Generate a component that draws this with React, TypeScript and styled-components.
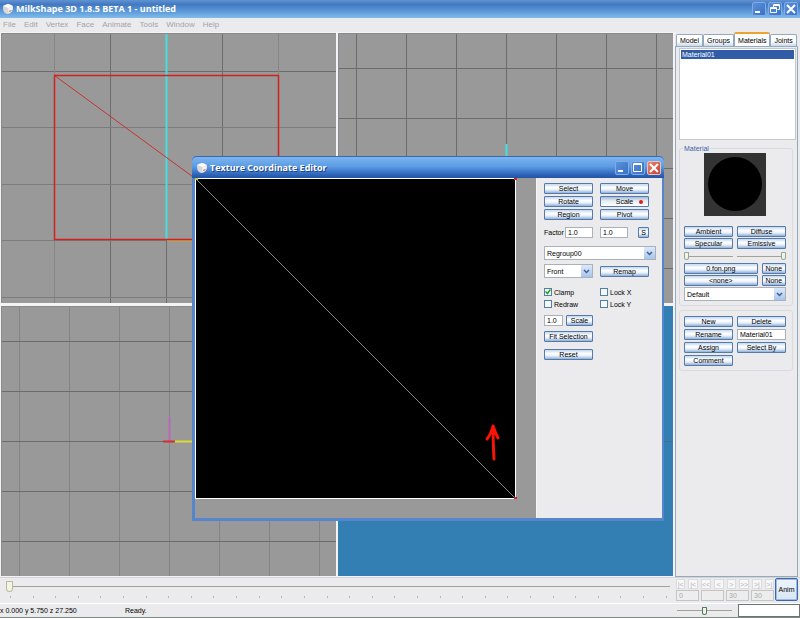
import React from 'react';
import styled, { createGlobalStyle, css } from 'styled-components';

const GlobalStyle = createGlobalStyle`
  *, *::before, *::after { box-sizing: border-box; }
  body { margin: 0; background: #ebebed; }
  body, button, input, select {
    font-family: "Liberation Sans", Arial, sans-serif;
    font-size: 7px;
    line-height: 9px;
    color: #000;
  }
  button, input, select, fieldset { margin: 0; padding: 0; }
`;

const Shell = styled.div`
  position: relative;
  display: flex;
  flex-direction: column;
  min-height: 100vh;
  border-bottom: 1px solid #7d8a84;
`;

const TitleBar = styled.header`
  display: flex;
  align-items: center;
  height: 18px;
  padding: 0 2px;
  gap: 2px;
  background: linear-gradient(#5f93d4, #4478bf 25%, #5d9bdb 65%, #82bbea);
`;

const titleText = css`
  flex: 1;
  margin: 0;
  font-family: "Open Sans", "Noto Sans", sans-serif;
  font-size: 9px;
  font-weight: 700;
  line-height: 12px;
  color: #fff;
  white-space: nowrap;
`;

const AppTitle = styled.h1`
  ${titleText}
`;

const WindowButtons = styled.div`
  display: flex;
  gap: 2px;
`;

const CaptionButton = styled.button<{ $danger?: boolean }>`
  display: flex;
  width: 14px;
  height: 14px;
  border: 1px solid ${p => (p.$danger ? '#e9c3c0' : '#7fabe6')};
  border-radius: 2px;
  background: ${p => (p.$danger ? 'linear-gradient(135deg, #e58a76, #c83b2c)' : 'linear-gradient(135deg, #5a90da, #3a72c4)')};
  svg { width: 12px; height: 12px; }
`;

const MenuBar = styled.nav`
  display: flex;
  gap: 8px;
  height: 14px;
  padding: 2px 3px;
  background: #ebebed;
`;

const MenuLink = styled.a`
  font-size: 8px;
  line-height: 10px;
  color: #a4a4a7;
  text-decoration: none;
`;

const Workspace = styled.main`
  flex: 1;
  display: grid;
  grid-template-columns: 1fr 125px;
  gap: 2px;
  background: #f4f4f6;
`;

const Views = styled.div`
  display: grid;
  grid-template: 1fr 1fr / 1fr 1fr;
  gap: 3px 2px;
  padding: 1px 0 1px 1px;
`;

const View = styled.svg<{ $empty?: boolean }>`
  display: block;
  width: 100%;
  height: 100%;
  border: 1px solid ${p => (p.$empty ? '#337fb3' : '#8a8a8c')};
  border-width: 1px 0 0 1px;
  background: ${p => (p.$empty ? '#337fb3' : '#999')};
`;

const SidePanel = styled.aside`
  display: flex;
  flex-direction: column;
  background: #ebebed;
`;

const TabList = styled.div`
  display: flex;
  align-items: flex-end;
  height: 14px;
  padding-left: 1px;
`;

const Tab = styled.button<{ $active?: boolean }>`
  height: ${p => (p.$active ? 14 : 12)}px;
  padding: 0 3px;
  border: 1px solid #94a9c0;
  border-top: ${p => (p.$active ? '2px solid #eda32f' : '1px solid #94a9c0')};
  border-bottom: 0;
  border-radius: 2px 2px 0 0;
  background: ${p => (p.$active ? '#fcfcfd' : 'linear-gradient(#fff 60%, #c9d8ea)')};
`;

const TabPage = styled.div`
  flex: 1;
  display: flex;
  flex-direction: column;
  margin-right: 2px;
  padding: 1px 1px 1px 3px;
  border: 1px solid #93aabd;
`;

const MaterialList = styled.ul`
  height: 92px;
  margin: 0 0 4px;
  padding: 1px;
  border: 1px solid #c4c8cc;
  background: #fff;
  list-style: none;
`;

const MaterialItem = styled.li`
  padding-left: 1px;
  background: #315da8;
  color: #fff;
`;

const Group = styled.fieldset<{ $gap: number }>`
  display: flex;
  flex-direction: column;
  gap: ${p => p.$gap}px;
  min-width: 0;
  margin: 0 3px 4px 0;
  padding: 5px 6px 4px 4px;
  border: 1px solid #d9dadc;
  border-radius: 3px;
`;

const Legend = styled.legend`
  height: 9px;
  padding: 0 1px;
  margin-left: -1px;
  color: #3c62a8;
`;

const Preview = styled.svg`
  width: 62px;
  height: 63px;
  margin: -5px auto 9px;
  background: #333;
`;

const Pair = styled.div<{ $wide?: boolean }>`
  display: grid;
  grid-template-columns: ${p => (p.$wide ? '3fr 1fr' : '1fr 1fr')};
  gap: 4px;
  align-items: center;
`;

const PushButton = styled.button<{ $pressed?: boolean }>`
  position: relative;
  width: 100%;
  height: 11px;
  border: 1px solid #5579aa;
  border-radius: 1px;
  background: ${p =>
    p.$pressed
      ? 'linear-gradient(#a8bcd8, #e8edf4 45%, #fff)'
      : 'linear-gradient(#c4d8ee, #fff 40%, #e9f0f8 65%, #8fb0da)'};
  white-space: nowrap;
`;

const RedDot = styled.i`
  position: absolute;
  right: 5px;
  top: 3px;
  width: 4px;
  height: 4px;
  border-radius: 50%;
  background: #e21c1c;
`;

const TextBox = styled.input`
  width: 100%;
  min-width: 0;
  height: 11px;
  padding: 0 2px;
  border: 1px solid #a9b1bb;
  background: #fff;
  &:disabled { background: #ededee; color: #aaa; border-color: #c2c4c6; }
`;

const Combo = styled.span`
  position: relative;
  display: block;
  height: 14px;
  svg {
    position: absolute;
    right: 1px;
    top: 1px;
    width: 11px;
    height: 12px;
    background: linear-gradient(#dce9fb, #a9c5ec);
    pointer-events: none;
  }
`;

const Select = styled.select`
  width: 100%;
  height: 14px;
  padding: 0 2px;
  border: 1px solid #a9b1bb;
  border-radius: 0;
  background: #fff;
  appearance: none;
`;

const Range = styled.input<{ $tone?: string; $tall?: boolean }>`
  appearance: none;
  display: block;
  width: 100%;
  min-width: 0;
  height: ${p => (p.$tall ? 14 : 12)}px;
  background: linear-gradient(#a3a395, #a3a395) center / 100% 1px no-repeat;
  &::-webkit-slider-thumb {
    appearance: none;
    width: ${p => (p.$tall ? 7 : 5)}px;
    height: ${p => (p.$tall ? 11 : 8)}px;
    border: 1px solid ${p => p.$tone || '#8fa89c'};
    border-radius: 1px 1px 4px 4px;
    background: #f3f3e6;
  }
`;

const Footer = styled.footer`
  display: grid;
  grid-template-columns: 1fr 98px 26px;
  height: 26px;
  border-top: 1px solid #d4d4d7;
`;

const Timeline = styled.div`
  display: flex;
  flex-direction: column;
  padding: 1px 6px 0;
`;

const Ticks = styled.div`
  display: flex;
  justify-content: space-between;
  padding: 3px 3px 0 4px;
`;

const Tick = styled.i`
  width: 1px;
  height: 2px;
  background: #b4b4b6;
`;

const Transport = styled.div`
  display: grid;
  grid-template-rows: 10px 12px;
  gap: 1px;
  padding-top: 1px;
`;

const TransportRow = styled.div<{ $columns: number }>`
  display: grid;
  grid-template-columns: repeat(${p => p.$columns}, 1fr);
  gap: ${p => (p.$columns > 4 ? 3 : 2)}px;
`;

const TransportButton = styled.button`
  border: 1px solid #dcdcde;
  background: #f7f7f8;
  color: #b4b4b7;
  line-height: 7px;
`;

const AnimButton = styled.button`
  width: 23px;
  height: 23px;
  margin-left: 1px;
  border: 1px solid #3d67aa;
  border-radius: 2px;
  background: linear-gradient(#eef4fc, #d9e6f5);
  box-shadow: inset 0 0 0 1px #9dbbe4;
`;

const StatusBar = styled.div`
  display: grid;
  grid-template-columns: 119px 1fr 55px 62px;
  gap: 0 6px;
  align-items: center;
  height: 14px;
  border-top: 1px solid #fff;
`;

const StatusText = styled.span`
  white-space: nowrap;
`;

const StatusBox = styled.input`
  width: 100%;
  height: 13px;
  border: 1px solid #6d7471;
  background: #fff;
`;

const Dialog = styled.section`
  position: absolute;
  left: 192px;
  top: 156px;
  width: 472px;
  border: 3px solid #5585cb;
  border-width: 0 2px 3px 3px;
  border-radius: 5px 5px 0 0;
  background: #ebebed;
`;

const DialogTitleBar = styled.header`
  display: flex;
  align-items: center;
  gap: 2px;
  height: 22px;
  margin: 0 -2px 0 -3px;
  padding: 0 3px 0 4px;
  border-radius: 5px 5px 0 0;
  border-top: 1px solid #3b68b5;
  background: linear-gradient(#7db4ee, #5c9ce4 45%, #2c63b8 85%, #2452a4);
`;

const DialogTitle = styled.h2`
  ${titleText}
  text-shadow: 1px 1px 0 #1c3f86;
`;

const DialogBody = styled.div`
  display: grid;
  grid-template-columns: 1fr 125px;
`;

const TextureArea = styled.div`
  padding-bottom: 19px;
  background: #999;
  border-right: 1px solid #f5f5f6;
`;

const TextureCanvas = styled.svg`
  display: block;
  width: 100%;
  height: 321px;
`;

const Controls = styled.form`
  display: flex;
  flex-direction: column;
  align-items: flex-start;
  padding: 5px 0 0 7px;
`;

const ToolGrid = styled.div`
  display: grid;
  grid-template-columns: 49px 49px;
  gap: 2px 7px;
`;

const FieldRow = styled.div<{ $top?: number; $columns: string; $gap?: number }>`
  display: grid;
  grid-template-columns: ${p => p.$columns};
  gap: ${p => p.$gap ?? 0}px;
  align-items: center;
  margin-top: ${p => p.$top ?? 0}px;
`;

const CheckLabel = styled.label`
  display: flex;
  align-items: center;
  gap: 2px;
  height: 10px;
  white-space: nowrap;
`;

const CheckBox = styled.input`
  appearance: none;
  width: 8px;
  height: 8px;
  margin: 0;
  border: 1px solid #547d9f;
  background: #f4f7f8;
`;

const CheckHolder = styled.span`
  position: relative;
  display: flex;
  svg { position: absolute; left: 1px; top: 1px; width: 6px; height: 6px; pointer-events: none; }
`;

const Logo = () => (
  <svg width="12" height="12" viewBox="0 0 12 12" aria-hidden="true">
    <path d="M1 3.500Q1 2 4 1.500q3-1 4.500 0Q11 2 11 4q0 3-1 4.500T6 11q-2 0-3.500-1.500Q1 8.500 1 3.500z" fill="#d6d7da" />
    <path d="M1.500 3 6 1l4.500 2L6.500 5z" fill="#fff" />
    <path d="M6.500 5 11 3.500 10 8l-3.500 2.500z" fill="#f6f1ef" />
    <path d="m7 8 2.500-1v1L7.500 9z" fill="#d3664f" />
  </svg>
);

const glyphs = {
  minimize: 'M2 9h5',
  restore: 'M4.500 4.500v-3h6v5h-2M1.500 4.500h6v5h-6zM2 5.500h5M5 2.500h5',
  maximize: 'M1.500 1.500h8v8h-8zM2 2.500h7',
  close: 'm2 2 8 8M10 2l-8 8',
};

const Caption = ({ kind, danger }: { kind: keyof typeof glyphs; danger?: boolean }) => (
  <CaptionButton type="button" aria-label={kind} $danger={danger}>
    <svg viewBox="0 0 12 12" fill="none" stroke="#fff" strokeWidth={kind === 'close' || kind === 'minimize' ? 2 : 1}>
      <path d={glyphs[kind]} />
    </svg>
  </CaptionButton>
);

const Dropdown = ({ label, value }: { label: string; value: string }) => (
  <Combo>
    <Select aria-label={label} defaultValue={value}>
      <option>{value}</option>
    </Select>
    <svg viewBox="0 0 11 12" fill="none" stroke="#41608f" strokeWidth="1.5" aria-hidden="true">
      <path d="m3 5 2.500 2.500L8 5" />
    </svg>
  </Combo>
);

const Check = ({ label, checked }: { label: string; checked?: boolean }) => (
  <CheckLabel>
    <CheckHolder>
      <CheckBox type="checkbox" defaultChecked={checked} />
      {checked && (
        <svg viewBox="0 0 6 6" fill="none" stroke="#21a121" strokeWidth="1.500" aria-hidden="true">
          <path d="m.5 2.500 2 2 3-4" />
        </svg>
      )}
    </CheckHolder>
    {label}
  </CheckLabel>
);

const Lines = ({ xs, ys, xColor = '#6c6c6c', yColor = '#6c6c6c' }: { xs: number[]; ys: number[]; xColor?: string; yColor?: string }) => (
  <g shapeRendering="crispEdges">
    {xs.map(x => <rect key={`x${x}`} x={x} y="0" width="1" height="100%" fill={xColor} />)}
    {ys.map(y => <rect key={`y${y}`} x="0" y={y} width="100%" height="1" fill={yColor} />)}
  </g>
);

const menus = ['File', 'Edit', 'Vertex', 'Face', 'Animate', 'Tools', 'Window', 'Help'];
const tools = ['Select', 'Move', 'Rotate', 'Scale', 'Region', 'Pivot'];
const transport = ['|<', '|<', '<<', '<', '>', '>>', '>|', '>|'];
const frames = ['0', '', '30', '30'];

export default function App() {
  return (
    <Shell>
      <GlobalStyle />
      <TitleBar>
        <Logo />
        <AppTitle>MilkShape 3D 1.8.5 BETA 1 - untitled</AppTitle>
        <WindowButtons>
          <Caption kind="minimize" />
          <Caption kind="restore" />
          <Caption kind="close" />
        </WindowButtons>
      </TitleBar>
      <MenuBar>
        {menus.map(m => <MenuLink key={m} href="#">{m}</MenuLink>)}
      </MenuBar>

      <Workspace>
        <Views>
          <View>
            <Lines xs={[108, 164, 220]} ys={[37]} />
            <Lines xs={[52, 276]} ys={[93, 150, 206, 263]} xColor="#868686" yColor="#7c7c7c" />
            <path d="M164.5 0v206" stroke="#45dede" strokeWidth="2" />
            <path d="M165 206.500h60" stroke="#c4a050" strokeWidth="2" />
            <path d="M52.500 41.500 276.500 205.500" stroke="#c83232" />
            <rect x="52.500" y="41.500" width="224" height="164" fill="none" stroke="#d42020" strokeWidth="1.500" />
          </View>
          <View>
            <Lines xs={[17, 67, 117, 167, 217, 267, 317]} ys={[34, 84, 134, 184, 234]} />
            <path d="M167.500 110v100" stroke="#45dede" strokeWidth="2" />
          </View>
          <View>
            <Lines xs={[17, 67, 117, 167, 217, 267, 317]} ys={[34, 84, 134, 184, 234]} xColor="#858585" />
            <path d="M167.500 110v24" stroke="#b569b8" strokeWidth="2" />
            <path d="M172 134.500h50" stroke="#dcdc35" strokeWidth="2" />
            <path d="M161 134.500h12" stroke="#ce2f2f" strokeWidth="2" />
          </View>
          <View $empty>
            <Lines xs={[]} ys={[134]} yColor="#466f8c" />
          </View>
        </Views>

        <SidePanel>
          <TabList role="tablist">
            <Tab role="tab">Model</Tab>
            <Tab role="tab">Groups</Tab>
            <Tab role="tab" aria-selected $active>Materials</Tab>
            <Tab role="tab">Joints</Tab>
          </TabList>
          <TabPage>
            <MaterialList>
              <MaterialItem>Material01</MaterialItem>
            </MaterialList>
            <Group $gap={1}>
              <Legend>Material</Legend>
              <Preview>
                <circle cx="31" cy="31" r="27" />
              </Preview>
              <Pair>
                <PushButton>Ambient</PushButton>
                <PushButton>Diffuse</PushButton>
              </Pair>
              <Pair>
                <PushButton>Specular</PushButton>
                <PushButton>Emissive</PushButton>
              </Pair>
              <Pair>
                <Range type="range" aria-label="Shininess" defaultValue={0} />
                <Range type="range" aria-label="Transparency" defaultValue={100} />
              </Pair>
              <Pair $wide>
                <PushButton>0.fon.png</PushButton>
                <PushButton>None</PushButton>
              </Pair>
              <Pair $wide>
                <PushButton>&lt;none&gt;</PushButton>
                <PushButton>None</PushButton>
              </Pair>
              <Dropdown label="Material mode" value="Default" />
            </Group>
            <Group $gap={2}>
              <Pair>
                <PushButton>New</PushButton>
                <PushButton>Delete</PushButton>
              </Pair>
              <Pair>
                <PushButton>Rename</PushButton>
                <TextBox aria-label="Material name" defaultValue="Material01" />
              </Pair>
              <Pair>
                <PushButton>Assign</PushButton>
                <PushButton>Select By</PushButton>
              </Pair>
              <Pair>
                <PushButton>Comment</PushButton>
              </Pair>
            </Group>
          </TabPage>
        </SidePanel>
      </Workspace>

      <Footer>
        <Timeline>
          <Range $tall $tone="#b9b99c" type="range" aria-label="Frame" defaultValue={0} />
          <Ticks>{Array.from({ length: 30 }, (_, i) => <Tick key={i} />)}</Ticks>
        </Timeline>
        <Transport>
          <TransportRow $columns={8}>
            {transport.map((t, i) => <TransportButton key={i} disabled>{t}</TransportButton>)}
          </TransportRow>
          <TransportRow $columns={4}>
            {frames.map((f, i) => <TextBox key={i} aria-label={`Frame field ${i + 1}`} disabled defaultValue={f} />)}
          </TransportRow>
        </Transport>
        <AnimButton>Anim</AnimButton>
      </Footer>
      <StatusBar>
        <StatusText>x 0.000 y 5.750 z 27.250</StatusText>
        <StatusText>Ready.</StatusText>
        <Range type="range" aria-label="Speed" defaultValue={50} $tone="#4a7a64" />
        <StatusBox aria-label="Message" />
      </StatusBar>

      <Dialog role="dialog" aria-label="Texture Coordinate Editor">
        <DialogTitleBar>
          <Logo />
          <DialogTitle>Texture Coordinate Editor</DialogTitle>
          <WindowButtons>
            <Caption kind="minimize" />
            <Caption kind="maximize" />
            <Caption kind="close" danger />
          </WindowButtons>
        </DialogTitleBar>
        <DialogBody>
          <TextureArea>
            <TextureCanvas>
              <rect x="0.500" y="0.500" width="320" height="320" fill="#000" stroke="#fff" />
              <path d="m1 1 319 319" stroke="#8a8a8a" />
              <path d="M0 1h3" stroke="#c8c832" strokeWidth="2" />
              <path d="M319 320h3M319 1h3" stroke="#d02222" strokeWidth="2" />
              <path d="M299 281q-1-16-1-32m-6 12q4-5 6-13 2 6 5 12" fill="none" stroke="#fa1405" strokeWidth="3" strokeLinecap="round" strokeLinejoin="round" />
            </TextureCanvas>
          </TextureArea>
          <Controls>
            <ToolGrid>
              {tools.map(t => (
                <PushButton key={t} type="button" $pressed={t === 'Scale'}>
                  {t}
                  {t === 'Scale' && <RedDot />}
                </PushButton>
              ))}
            </ToolGrid>
            <FieldRow $top={7} $columns="49px 49px" $gap={7}>
              <FieldRow $columns="21px 28px">
                <label htmlFor="factor-x">Factor</label>
                <TextBox id="factor-x" defaultValue="1.0" />
              </FieldRow>
              <FieldRow $columns="28px 11px" $gap={10}>
                <TextBox aria-label="Factor Y" defaultValue="1.0" />
                <PushButton type="button">S</PushButton>
              </FieldRow>
            </FieldRow>
            <FieldRow $top={8} $columns="112px">
              <Dropdown label="Group" value="Regroup00" />
            </FieldRow>
            <FieldRow $top={4} $columns="49px 49px" $gap={7}>
              <Dropdown label="Projection" value="Front" />
              <PushButton type="button">Remap</PushButton>
            </FieldRow>
            <FieldRow $top={9} $columns="49px 49px" $gap={7}>
              <Check label="Clamp" checked />
              <Check label="Lock X" />
            </FieldRow>
            <FieldRow $top={2} $columns="49px 49px" $gap={7}>
              <Check label="Redraw" />
              <Check label="Lock Y" />
            </FieldRow>
            <FieldRow $top={6} $columns="19px 27px" $gap={3}>
              <TextBox aria-label="Scale amount" defaultValue="1.0" />
              <PushButton type="button">Scale</PushButton>
            </FieldRow>
            <FieldRow $top={5} $columns="49px">
              <PushButton type="button">Fit Selection</PushButton>
            </FieldRow>
            <FieldRow $top={7} $columns="49px">
              <PushButton type="button">Reset</PushButton>
            </FieldRow>
          </Controls>
        </DialogBody>
      </Dialog>
    </Shell>
  );
}
